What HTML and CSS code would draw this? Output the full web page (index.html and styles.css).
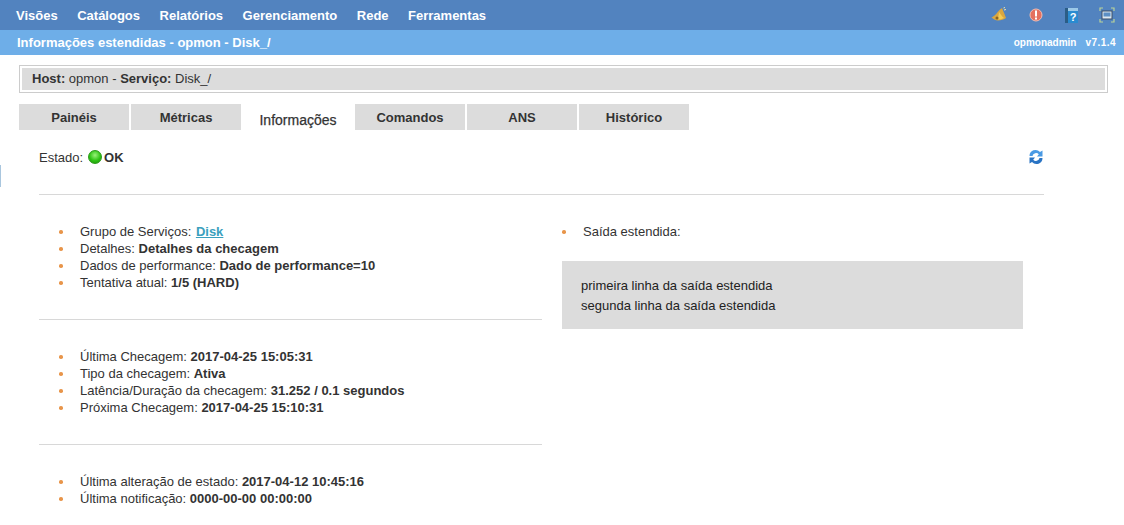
FILE: index.html
```html
<!DOCTYPE html>
<html lang="pt">
<head>
<meta charset="utf-8">
<title>Informações estendidas</title>
<link rel="stylesheet" href="styles.css">
</head>
<body>
<header>
  <nav class="menu">
    <div class="menu-items">
      <a>Visões</a><a>Catálogos</a><a>Relatórios</a><a>Gerenciamento</a><a>Rede</a><a>Ferramentas</a>
    </div>
    <div class="menu-icons">
      <svg class="ic" viewBox="0 0 16 16"><path d="M.5 10.500C4 9 6.500 5 9 2.500L11 1l.8 2c1.200 2.500 2.200 5.500 3.200 8-2 1.500-5 2.500-8 2.500-2.500 0-5-1.500-6.500-3.500z" fill="#d9a640"/><path d="M8 5c1.500 2 3 4.500 5 6-2 1-4 1.500-6 1.500z" fill="#f3cb55"/><circle cx="6" cy="11" r="1.500" fill="#8a6420"/><path d="M12.500 1 14 .5M13 3l2-.5" stroke="#f2e6ae" stroke-width="1"/></svg>
      <svg class="ic" viewBox="0 0 16 16"><circle cx="9" cy="8" r="6" fill="#e4705f" stroke="#f3bdb2"/><rect x="8" y="3.500" width="2" height="6" fill="#fff"/><rect x="8" y="10.500" width="2" height="2" fill="#fff"/></svg>
      <svg class="ic" viewBox="0 0 16 16"><rect x="2" y="1" width="3" height="15" fill="#2b5d86"/><rect x="5" y="1" width="10" height="15" fill="#2a8bd0"/><rect x="5" y="1" width="10" height="3" fill="#9cc9e8"/><text x="10" y="13.500" class="qmark">?</text></svg>
      <svg class="ic" viewBox="0 0 16 16"><path d="M1 4V1h3M12 1h3v3M15 12v3h-3M4 15H1v-3" fill="none" stroke="#b9d39a" stroke-width="1.200"/><rect x="3" y="4" width="10" height="8" fill="#dce8f2" stroke="#3a4f66"/><rect x="4.500" y="5.500" width="7" height="4" fill="#5c8fc4"/></svg>
    </div>
  </nav>
  <div class="subbar">
    <h1>Informações estendidas - opmon - Disk_/</h1>
    <div class="user"><span>opmonadmin</span><span class="version">v7.1.4</span></div>
  </div>
</header>
<div class="edge"></div>
<main>
  <div class="hostbox"><div class="hostinner"><b>Host:</b> opmon - <b>Serviço:</b> Disk_/</div></div>
  <div class="tabs">
    <a class="tab">Painéis</a><a class="tab">Métricas</a><a class="tab active">Informações</a><a class="tab">Comandos</a><a class="tab">ANS</a><a class="tab">Histórico</a>
  </div>
  <section class="panel">
    <div class="status">
      <div class="state">Estado: <span class="led"></span> <b>OK</b></div>
      <svg class="refresh" viewBox="0 0 16 16"><path d="M1.500 7A6 6 0 0 1 12 3L14.500 1.500v6H9l1.800-2.200A3.600 3.600 0 0 0 4.500 7z" fill="#4a9ae4"/><path d="M14.500 9A6 6 0 0 1 4 13L1.500 14.500v-6H7l-1.800 2.200A3.600 3.600 0 0 0 11.500 9z" fill="#2a74c4"/></svg>
    </div>
    <div class="columns">
      <div class="col-left">
        <ul class="info first">
          <li>Grupo de Serviços: <a class="link">Disk</a></li>
          <li>Detalhes: <b>Detalhes da checagem</b></li>
          <li>Dados de performance: <b>Dado de performance=10</b></li>
          <li>Tentativa atual: <b>1/5 (HARD)</b></li>
        </ul>
        <ul class="info">
          <li>Última Checagem: <b>2017-04-25 15:05:31</b></li>
          <li>Tipo da checagem: <b>Ativa</b></li>
          <li>Latência/Duração da checagem: <b>31.252 / 0.1 segundos</b></li>
          <li>Próxima Checagem: <b>2017-04-25 15:10:31</b></li>
        </ul>
        <ul class="info">
          <li>Última alteração de estado: <b>2017-04-12 10:45:16</b></li>
          <li>Última notificação: <b>0000-00-00 00:00:00</b></li>
        </ul>
      </div>
      <div class="col-right">
        <ul class="info extended"><li>Saída estendida:</li></ul>
        <div class="output">primeira linha da saída estendida<br>segunda linha da saída estendida</div>
      </div>
    </div>
  </section>
</main>
</body>
</html>
```
FILE: styles.css
```css
* { box-sizing: border-box; }
html, body { margin: 0; height: 100%; overflow: hidden; }
body { font-family: "Liberation Sans", Arial, sans-serif; font-size: 13px; color: #333; background: #fff; }
b { font-weight: bold; }

.menu { height: 30px; background: #5283bf; display: flex; justify-content: space-between; align-items: center; padding: 0 9px 0 16px; }
.menu-items { display: flex; gap: 19.500px; font-size: 13px; font-weight: bold; color: #fff; }
.menu-icons { display: flex; gap: 20px; align-items: center; }
.ic { width: 16px; height: 16px; display: block; }
.qmark { font: bold 11px "Liberation Sans", sans-serif; fill: #fff; text-anchor: middle; }

.subbar { height: 25px; background: #6eaee8; display: flex; justify-content: space-between; align-items: center; padding: 0 8px 0 17px; color: #fff; }
.subbar h1 { margin: 0; font-size: 13px; font-weight: bold; }
.user { display: flex; gap: 9px; font-size: 10px; font-weight: bold; }
.version { letter-spacing: .45px; }

.edge { position: absolute; left: 0; top: 165px; width: 1px; height: 22px; background: #a9c6de; }

main { padding: 10px 16px 0 19px; }
.hostbox { height: 28px; border: 1px solid #ccc; padding: 2px; }
.hostinner { height: 22px; background: #dcdcdc; padding-left: 10px; line-height: 22px; color: #333; }

.tabs { display: flex; gap: 2px; margin-top: 11px; }
.tab { width: 110px; height: 26px; background: #dcdcdc; text-align: center; line-height: 27px; font-weight: bold; color: #333; }
.tab.active { background: #fff; font-size: 14px; font-weight: normal; line-height: 32px; -webkit-text-stroke: .25px #333; }

.panel { width: 1005px; margin-left: 20px; }
.status { height: 65px; padding-top: 19px; border-bottom: 1px solid #d8d8d8; display: flex; justify-content: space-between; align-items: flex-start; }
.state { display: flex; align-items: center; gap: 3px; height: 16px; }
.led { width: 14px; height: 14px; margin: 0 0 0 2px; border-radius: 50%; background: radial-gradient(circle at 50% 35%, #9af27a, #2fc414 55%, #1d8f0a); border: 1px solid #2a9a18; }
.state b { color: #333; margin-left: -1px; }
.refresh { width: 16px; height: 16px; }

.columns { display: flex; gap: 20px; }
.col-left { width: 503px; }
.info { list-style: none; margin: 0; padding: 28px 0 28px 41px; border-bottom: 1px solid #d8d8d8; line-height: 17px; }
.col-left .info:last-child { border-bottom: 0; }
.info li { position: relative; }
.info li::before { content: ""; position: absolute; left: -21px; top: 7px; width: 3.500px; height: 3.500px; border-radius: 50%; background: #e8954a; }
.link { color: #3aa0bd; font-weight: bold; text-decoration: underline; margin-left: 1px; }
.extended { border: 0; padding: 28px 0 0 21px; }
.output { width: 461px; height: 68px; margin-top: 21px; background: #dcdcdc; padding: 14.500px 19px; line-height: 20px; color: #222; }
```
